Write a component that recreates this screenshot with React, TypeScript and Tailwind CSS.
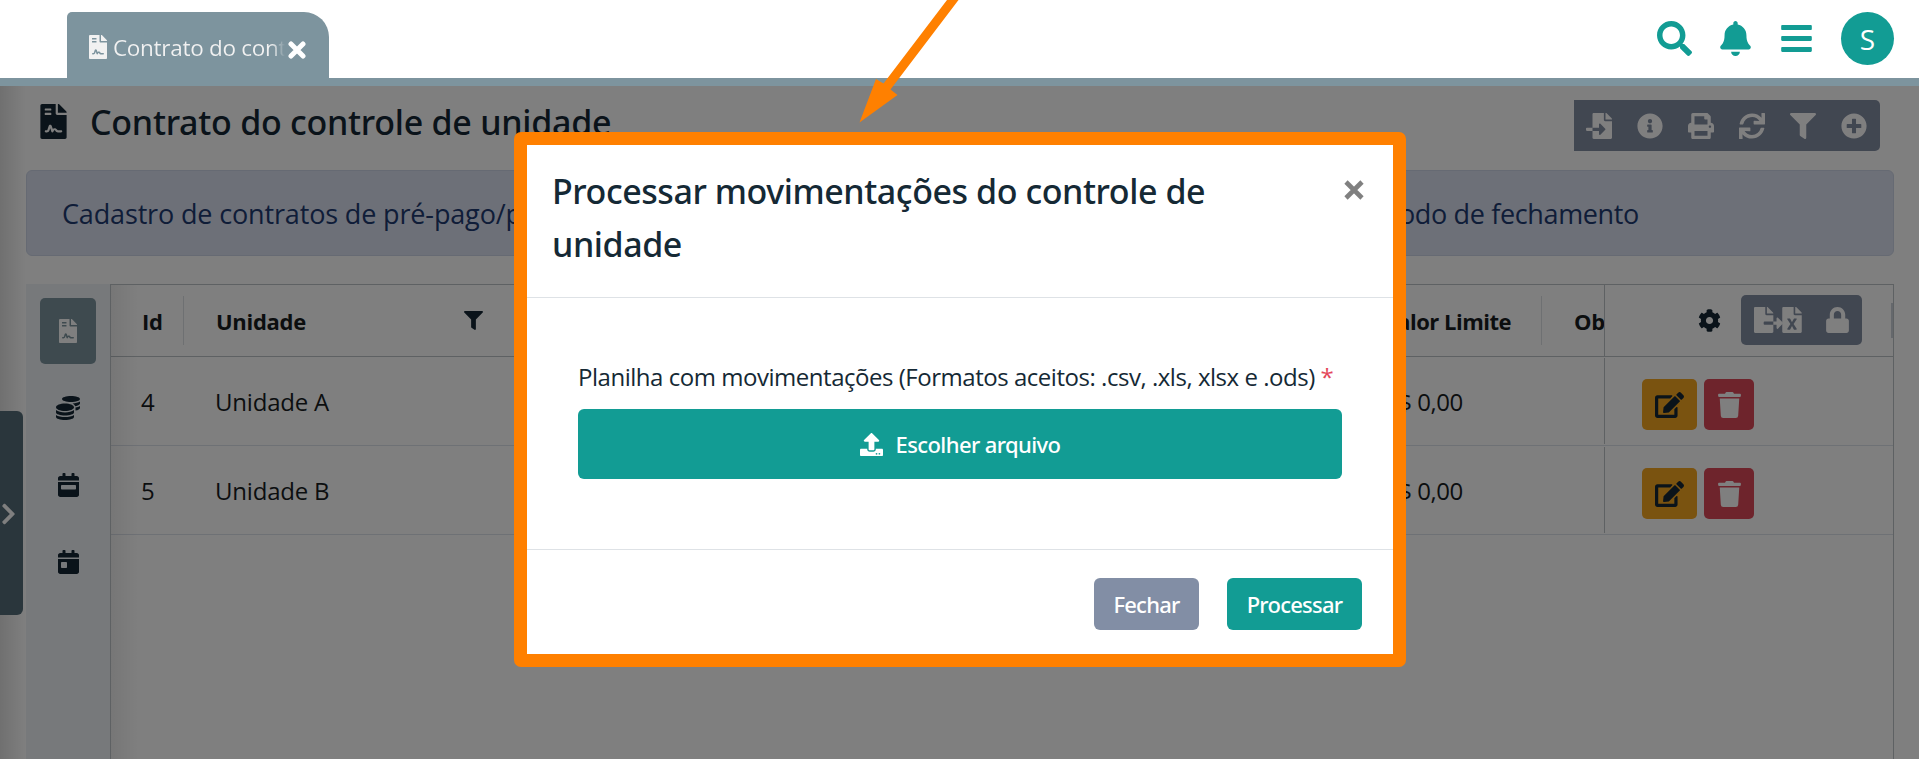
import type { ReactNode } from "react";
import {
  FaFileContract,
  FaSearch,
  FaBell,
  FaBars,
  FaFileImport,
  FaInfoCircle,
  FaPrint,
  FaSync,
  FaFilter,
  FaPlusCircle,
  FaCoins,
  FaCalendarWeek,
  FaCalendarDay,
  FaChevronRight,
  FaCog,
  FaFileExport,
  FaFileExcel,
  FaLock,
  FaEdit,
  FaTrash,
  FaUpload,
} from "react-icons/fa";

function TopBar() {
  return (
    <header className="flex h-[86px] items-end justify-between border-b-8 border-[#7d949e] bg-white pl-[67px] pr-[25px]">
      <div className="flex h-[66px] w-[262px] items-center rounded-tl-[5px] rounded-tr-[25px] bg-[#7d949e] pl-[22px] text-white">
        <FaFileContract className="mt-[3px] h-6 w-[18px] shrink-0 text-[#f1f1f1]" />
        <div className="ml-[6px] mt-[5px] w-[172px] shrink-0 overflow-hidden whitespace-nowrap bg-gradient-to-r from-[#f1f1f1] from-92% to-transparent bg-clip-text text-[22.5px] leading-[34px] tracking-[-0.3px] text-transparent">
          Contrato do cont
        </div>
        <svg className="ml-[3px] mt-[10px] h-[18px] w-[18px] shrink-0" viewBox="0 0 18 18">
          <path d="M3 3l12 12M15 3L3 15" stroke="#fff" strokeWidth="5" strokeLinecap="round" />
        </svg>
      </div>
      <div className="flex h-full items-center pb-px text-[#129c94]">
        <FaSearch className="h-[35px] w-[35px]" />
        <FaBell className="ml-[28px] h-[35px] w-[31px]" />
        <FaBars className="ml-[30px] h-[35px] w-[31px]" />
        <div className="ml-[29px] flex h-[53px] w-[53px] items-center justify-center rounded-full bg-[#129c94] text-[28px] leading-none text-white">
          <span>S</span>
        </div>
      </div>
    </header>
  );
}

const toolbar: ReactNode[] = [
  <FaFileImport key="import" />,
  <FaInfoCircle key="info" />,
  <FaPrint key="print" />,
  <FaSync key="sync" />,
  <FaFilter key="filter" />,
  <FaPlusCircle key="plus" />,
];

function SideTabs() {
  return (
    <nav className="flex w-[84px] shrink-0 flex-col items-center bg-[#eff2f7] pt-[14px] text-2xl text-[#152735]">
      <div className="flex h-[66px] w-14 items-center justify-center rounded-[5px] bg-[#7d949e] text-white">
        <FaFileContract className="h-6 w-[18px]" />
      </div>
      <div className="mt-[5px] flex h-[77px] items-center"><FaCoins /></div>
      <div className="flex h-[77px] items-center"><FaCalendarWeek className="h-6 w-[21px]" /></div>
      <div className="flex h-[77px] items-center"><FaCalendarDay className="h-6 w-[21px]" /></div>
    </nav>
  );
}

function HeaderRow() {
  return (
    <div className="flex h-[72px] border-b border-[#bdc3c7] text-[22px] font-bold leading-[34px] tracking-[-0.3px] text-[#181d1f]">
      <div className="mt-[11px] flex h-[49px] w-[73px] items-center border-r border-[#dde0e4] pl-[31px]">Id</div>
      <div className="mt-[11px] flex h-[49px] w-[404px] items-center pl-8">
        Unidade
        <FaFilter className="ml-[158px] h-[19px] w-[19px] text-[#152735]" />
      </div>
      <div className="mt-[11px] flex h-[49px] flex-1 items-center justify-end border-r border-[#dde0e4] pr-[30px] tracking-[-0.5px]">
        Valor Limite
      </div>
      <div className="mt-[11px] flex h-[49px] w-[62px] items-center overflow-hidden whitespace-nowrap pl-8">Ob</div>
      <div className="flex w-[289px] items-center border-l border-[#bdc3c7] pl-[93px]">
        <FaCog className="mt-[-1px] h-[23px] w-[23px] text-[#152735]" />
        <div className="mb-px ml-5 flex h-[50px] w-[121px] items-center rounded-[5px] bg-[#838ea3] pl-[13px] text-white">
          <FaFileExport className="h-[26px] w-[29px]" />
          <FaFileExcel className="-ml-px h-[26px] w-5" />
          <FaLock className="ml-6 h-[26px] w-[23px]" />
        </div>
        <div className="ml-[29px] h-[35px] w-0.5 bg-[#cbd0d8]" />
      </div>
    </div>
  );
}

function Row({ id, name }: { id: string; name: string }) {
  return (
    <div className="flex h-[89px] border-b border-[#dde2eb] text-2xl tracking-[-0.2px] text-[#181d1f]">
      <div className="w-[73px] pl-[30px] leading-[90px]">{id}</div>
      <div className="w-[404px] pl-[31px] leading-[90px]">{name}</div>
      <div className="flex-1 pl-[796px] leading-[90px] tracking-[-0.5px]">R$ 0,00</div>
      <div className="w-[62px]" />
      <div className="mb-px mt-px flex w-[289px] items-center gap-[7px] border-l border-[#bdc3c7] pl-[37px] pt-[7px]">
        <div className="flex h-[51px] w-[55px] items-center justify-center rounded-[5px] bg-[#f4a621] text-[#152735]">
          <FaEdit className="h-[26px] w-[29px]" />
        </div>
        <div className="flex h-[51px] w-[50px] items-center justify-center rounded-[5px] bg-[#dc4858] text-white">
          <FaTrash className="h-[26px] w-[23px]" />
        </div>
      </div>
    </div>
  );
}

function Modal() {
  return (
    <div className="absolute left-[514px] top-[132px] h-[535px] w-[892px] rounded-[7px] bg-[#ff8000] p-[13px] text-[#152935]">
      <div className="flex h-full flex-col bg-white">
        <div className="flex h-[153px] justify-between border-b border-[#dee2e6] pl-[25px] pr-[29px] pt-5">
          <h2 className="w-[700px] font-['Noto_Sans'] text-[34px] font-medium leading-[52.5px] tracking-[-0.43px]">
            Processar movimentações do controle de unidade
          </h2>
          <svg className="mt-[15px] h-5 w-5" viewBox="0 0 20 20">
            <path d="M2 2l16 16M18 2L2 18" stroke="#808080" strokeWidth="4.6" />
          </svg>
        </div>
        <div className="h-[251px] px-[51px] pt-[61px]">
          <div className="whitespace-nowrap text-2xl leading-9 tracking-[-0.47px]">
            Planilha com movimentações (Formatos aceitos: .csv, .xls, xlsx e .ods){" "}
            <span className="text-[#e4485a]">*</span>
          </div>
          <button className="mt-[14px] flex h-[70px] w-[764px] items-center justify-center rounded-md bg-[#129c94] font-['Noto_Sans'] text-[22px] font-medium tracking-[-0.6px] text-white">
            <FaUpload className="mr-[13px] h-[23px] w-[23px]" />
            Escolher arquivo
          </button>
        </div>
        <div className="flex flex-1 gap-7 border-t border-[#dee2e6] pl-[567px] pt-7 font-['Noto_Sans'] text-[22px] font-medium leading-[52px] tracking-[-0.75px] text-white">
          <button className="h-[52px] w-[105px] rounded-md bg-[#828ea5]">Fechar</button>
          <button className="h-[52px] w-[135px] rounded-md bg-[#129c94]">Processar</button>
        </div>
      </div>
    </div>
  );
}

export default function App() {
  return (
    <div className="relative flex h-[759px] w-[1919px] flex-col overflow-hidden bg-white font-['Open_Sans',sans-serif]">
      <TopBar />
      <main className="relative flex min-h-0 flex-1 flex-col pl-[26px] pr-[25px]">
        <div className="flex h-[84px] items-start justify-between pr-[14px] pt-[14px]">
          <div className="flex items-center pl-[14px] text-[#152735]">
            <FaFileContract className="mb-px h-[35px] w-[27px]" />
            <h1 className="ml-[23px] whitespace-nowrap font-['Noto_Sans'] text-[34px] font-medium leading-[44px] tracking-[-0.26px]">
              Contrato do controle de unidade
            </h1>
          </div>
          <div className="flex h-[51px] w-[306px] items-center justify-around rounded-r-[5px] bg-[#838ea3] pr-px text-[26px] text-white">
            {toolbar}
          </div>
        </div>
        <div className="flex h-[86px] shrink-0 items-center justify-between rounded-md border border-[#ccd5e6] bg-[#dae0f0] pl-[35px] pr-[254px] pt-0.5 text-[27px] text-[#1e3a70]">
          <span className="tracking-[-0.15px]">Cadastro de contratos de pré-pago/pós-pago</span>
          <span className="tracking-[-0.35px]">período de fechamento</span>
        </div>
        <div className="mt-7 flex min-h-0 flex-1">
          <SideTabs />
          <div className="flex-1 border-l border-r border-t border-[#bdc3c7]">
            <HeaderRow />
            <Row id="4" name="Unidade A" />
            <Row id="5" name="Unidade B" />
          </div>
        </div>
        <div className="absolute left-[111px] top-[199px] h-[474px] w-7 bg-gradient-to-r from-black/7 to-transparent" />
        <div className="absolute left-0 top-0 h-full w-[26px] bg-gradient-to-r from-black/12 to-transparent" />
        <div className="absolute left-0 top-[325px] flex h-[204px] w-[23px] items-center rounded-r-md bg-[#546c78] pl-px pt-px text-white">
          <FaChevronRight className="h-6 w-[15px]" />
        </div>
        <div className="absolute inset-0 bg-black/50" />
      </main>
      <Modal />
      <svg className="absolute left-[850px] top-0 h-[130px] w-[120px]" viewBox="850 0 120 130">
        <path d="M947 0H958.5L890.5 89.5L897.5 95L859.5 122.5L876 79L883.5 83.5Z" fill="#ff8000" />
      </svg>
    </div>
  );
}
